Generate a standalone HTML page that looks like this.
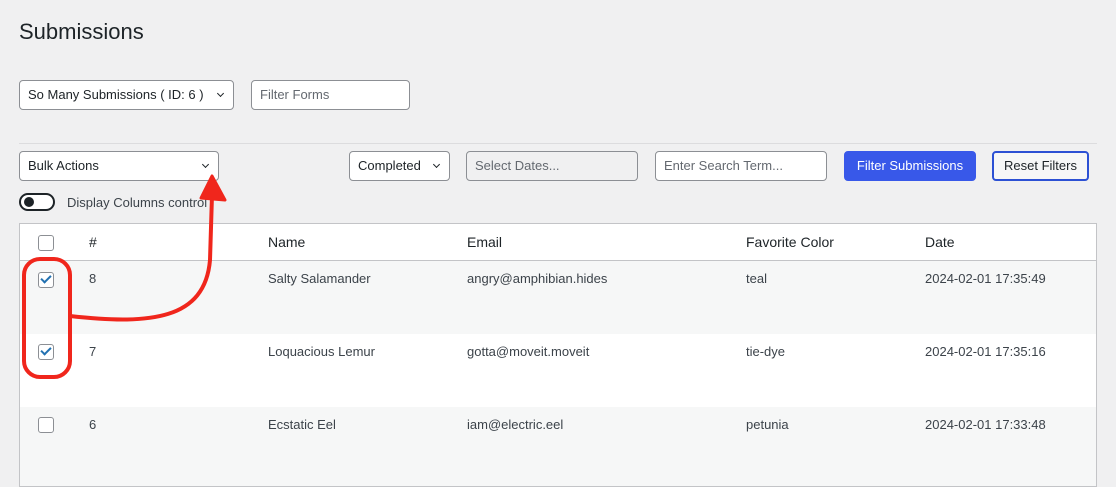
<!DOCTYPE html>
<html><head><meta charset="utf-8"><style>
body{margin:0;width:1116px;height:476px;background:#f0f0f1;font-family:"Liberation Sans",sans-serif;color:#1d2327;position:relative;overflow:hidden}
.a{position:absolute}
h1{position:absolute;left:19px;top:19px;margin:0;font-size:22px;font-weight:400}
.box{position:absolute;background:#fff;border:1px solid #8c8f94;border-radius:4px;box-sizing:border-box;font-size:13px;padding-left:8px;line-height:28px}
.chev{position:absolute;right:10px;top:10px;width:4px;height:4px;border-right:1.2px solid #1d2327;border-bottom:1.2px solid #1d2327;transform:rotate(45deg)}
.ph{color:#646970}
table{position:absolute;left:19px;top:223px;width:1078px;border-collapse:collapse;background:#fff;border:1px solid #c3c4c7;font-size:13px}
td,th{text-align:left;font-weight:400;vertical-align:top;padding:0}
th{height:36px;line-height:36px;font-size:14px;border-bottom:1px solid #c3c4c7}
tr.r td{height:73px;padding-top:10px;box-sizing:border-box;color:#3c434a}
tr.g{background:#f6f7f7}
.cb{display:inline-block;width:14px;height:14px;border:1px solid #8c8f94;border-radius:3px;background:#fff;margin-left:18px;position:relative;vertical-align:middle}
.cb.on::after{content:"";position:absolute;left:4px;top:0px;width:4px;height:8px;border-right:2px solid #2271b1;border-bottom:2px solid #2271b1;transform:rotate(45deg)}
</style></head><body>
<h1>Submissions</h1>
<div class="box" style="left:19px;top:80px;width:215px;height:30px">So Many Submissions ( ID: 6 )<span class="chev"></span></div>
<div class="box ph" style="left:251px;top:80px;width:159px;height:30px">Filter Forms</div>
<div class="a" style="left:19px;top:143px;width:1078px;height:1px;background:#dcdcde"></div>
<div class="box" style="left:19px;top:151px;width:200px;height:30px">Bulk Actions<span class="chev"></span></div>
<div class="box" style="left:349px;top:151px;width:101px;height:30px">Completed<span class="chev"></span></div>
<div class="box ph" style="left:466px;top:151px;width:172px;height:30px;background:#f0f0f1">Select Dates...</div>
<div class="box ph" style="left:655px;top:151px;width:172px;height:30px">Enter Search Term...</div>
<div class="box" style="left:844px;top:151px;width:132px;height:30px;background:#3858e9;border-color:#3858e9;color:#fff;padding:0;text-align:center">Filter Submissions</div>
<div class="box" style="left:992px;top:151px;width:97px;height:30px;border:2px solid #2c51d4;padding:0;text-align:center;line-height:26px;background:#f6f7f7">Reset Filters</div>
<div class="a" style="left:19px;top:193px;width:36px;height:18px;border:2px solid #1d2327;border-radius:10px;box-sizing:border-box;background:#fff"><div class="a" style="left:3px;top:2px;width:10px;height:10px;border-radius:50%;background:#1d2327"></div></div>
<div class="a" style="left:67px;top:195px;font-size:13px;color:#3c434a">Display Columns control</div>
<table>
<tr><th style="width:50px"><span class="cb"></span></th><th style="width:179px;padding-left:19px">#</th><th style="width:199px">Name</th><th style="width:279px">Email</th><th style="width:179px">Favorite Color</th><th>Date</th></tr>
<tr class="r g"><td><span class="cb on"></span></td><td style="padding-left:19px">8</td><td>Salty Salamander</td><td>angry@amphibian.hides</td><td>teal</td><td>2024-02-01 17:35:49</td></tr>
<tr class="r"><td><span class="cb on"></span></td><td style="padding-left:19px">7</td><td>Loquacious Lemur</td><td>gotta@moveit.moveit</td><td>tie-dye</td><td>2024-02-01 17:35:16</td></tr>
<tr class="r g"><td style="height:80px"><span class="cb"></span></td><td style="padding-left:19px">6</td><td>Ecstatic Eel</td><td>iam@electric.eel</td><td>petunia</td><td>2024-02-01 17:33:48</td></tr>
</table>
<svg class="a" style="left:0;top:0" width="1116" height="476">
<rect x="24" y="259" width="46" height="118" rx="16" fill="none" stroke="#f0261c" stroke-width="4"/>
<path d="M70 316 C150 325 205 320 210 260 L212 195" fill="none" stroke="#f0261c" stroke-width="4"/>
<path d="M201 198 L212 176 L225 200 Z" fill="#f0261c" stroke="#f0261c" stroke-width="3" stroke-linejoin="round"/>
</svg>
</body></html>
